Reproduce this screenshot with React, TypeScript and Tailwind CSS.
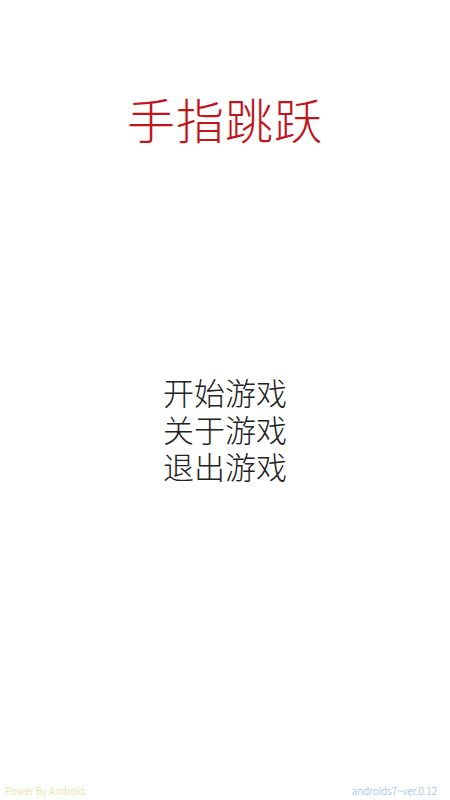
const MENU = ['开始游戏', '关于游戏', '退出游戏'];

export default function App() {
  return (
    <div
      className="relative flex h-[800px] w-full flex-col items-center bg-white"
      style={{ fontFamily: '"Noto Sans CJK SC", "Noto Sans", sans-serif' }}
    >
      <h1 className="mt-[94px] text-[48px] font-light leading-[48px] tracking-[1px] text-[#c0151b]">
        手指跳跃
      </h1>

      <div className="mt-[234px] flex flex-col items-center gap-[6px]">
        {MENU.map((item) => (
          <div
            key={item}
            className="cursor-pointer text-[31px] font-light leading-[31px] text-[#222]"
          >
            {item}
          </div>
        ))}
      </div>

      <div className="mt-auto flex w-full items-end justify-between px-[5px] pb-[3px] text-[10px] font-light leading-[12px]">
        <span className="text-[#e2d98a]">Power By Android</span>
        <span className="pr-[8px] text-[#7fb7d6]">androids7~ver.0.12</span>
      </div>
    </div>
  );
}
